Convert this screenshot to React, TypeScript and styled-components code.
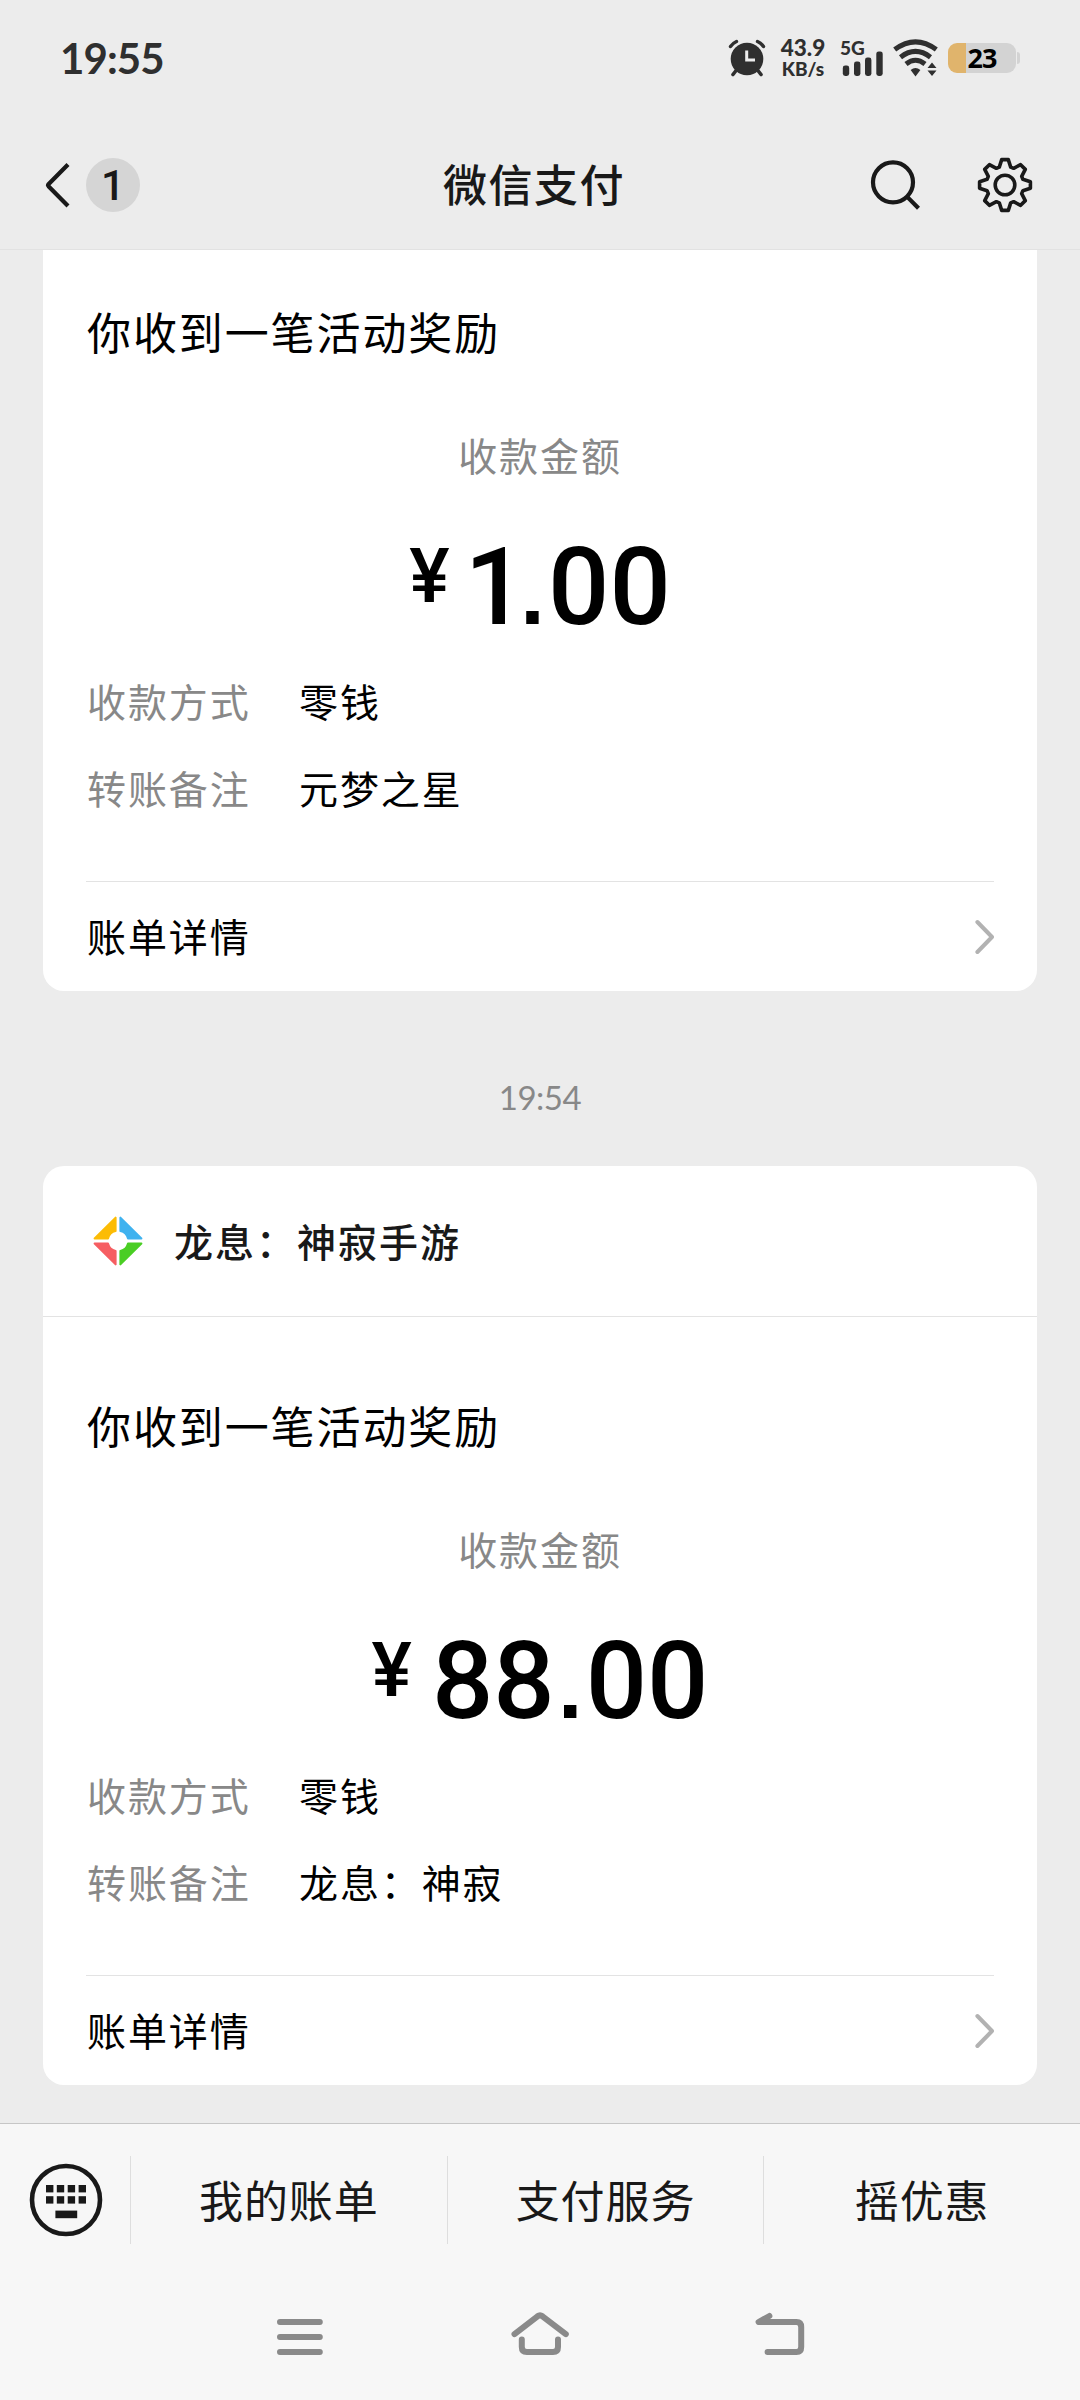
import React from "react";
import styled, { createGlobalStyle } from "styled-components";

const Global = createGlobalStyle`
  * { box-sizing: border-box; }
  body { margin: 0; background: #ececec; }
`;

const cjk = `"Noto Sans CJK SC", sans-serif`;

const Screen = styled.div`
  width: 1080px;
  height: 2400px;
  display: flex;
  flex-direction: column;
  overflow: hidden;
  background: #ececec;
  color: #000;
  font-family: ${cjk};
`;

const StatusBar = styled.div`
  flex: none;
  height: 120px;
  padding: 0 60px 4px 60px;
  display: flex;
  align-items: center;
  justify-content: space-between;
  color: #2f2f2f;
  font-family: Lato, sans-serif;
  font-weight: 700;
`;

const Clock = styled.div`
  font-size: 42px;
  letter-spacing: -0.9px;
`;

const StatusIcons = styled.div`
  display: flex;
  align-items: center;
`;

const Speed = styled.div`
  width: 46px;
  margin: 0 14px 0 14px;
  display: flex;
  flex-direction: column;
  align-items: center;
  font-size: 22.5px;
  font-weight: 900;
  line-height: 22px;
  white-space: nowrap;
`;

const SpeedUnit = styled.span`
  font-size: 19px;
  line-height: 20px;
`;

const Signal = styled.div`
  width: 44px;
  height: 38px;
  margin-right: 9px;
  position: relative;
`;

const Network = styled.span`
  position: absolute;
  left: 0;
  top: 0;
  font-size: 19px;
  font-weight: 900;
  line-height: 18px;
`;

const Battery = styled.div`
  width: 68px;
  height: 30px;
  margin-left: 9px;
  border-radius: 9px;
  display: flex;
  align-items: center;
  justify-content: center;
  background: linear-gradient(to right, #e0b46c 18px, #d3d3d3 18px);
  color: #000;
  font: 700 27px/30px "Noto Sans", sans-serif;
  letter-spacing: -1px;
`;

const BatteryTip = styled.div`
  width: 3px;
  height: 12px;
  margin: 0 0 0 1px;
  border-radius: 0 3px 3px 0;
  background: #d3d3d3;
`;

const TitleBar = styled.header`
  flex: none;
  height: 130px;
  padding: 0 44px 0 43px;
  display: grid;
  grid-template-columns: 1fr auto 1fr;
  align-items: center;
  border-bottom: 1px solid #e2e2e2;
`;

const BackGroup = styled.div`
  display: flex;
  align-items: center;
  gap: 15px;
`;

const Unread = styled.span`
  width: 54px;
  height: 54px;
  border-radius: 50%;
  background: #d5d5d5;
  color: #191919;
  text-align: center;
  font: 500 42px/56px Roboto, sans-serif;
`;

const Title = styled.h1`
  margin: 0;
  padding: 0 11px 4px 0;
  color: #191919;
  font-size: 44px;
  font-weight: 500;
  line-height: 60px;
  letter-spacing: 1.5px;
`;

const Actions = styled.div`
  display: flex;
  justify-content: flex-end;
  align-items: center;
  gap: 53px;
`;

const Feed = styled.main`
  flex: 1;
  padding: 0 43px 38px;
  display: flex;
  flex-direction: column;
`;

const Card = styled.article<{ $continued?: boolean }>`
  border-radius: ${(p) => (p.$continued ? "0 0 21px 21px" : "21px")};
  background: #fff;
`;

const Brand = styled.div`
  height: 151px;
  padding-left: 50px;
  display: flex;
  align-items: center;
  gap: 31px;
  border-bottom: 1px solid #e3e3e3;
  color: #191919;
  font-size: 39px;
  font-weight: 500;
  letter-spacing: 2px;
`;

const BrandName = styled.span`
  padding-bottom: 3px;
`;

const Body = styled.div<{ $top: number }>`
  padding: ${(p) => p.$top}px 43px 0;
`;

const Headline = styled.h2`
  margin: 0 0 0 1px;
  font-size: 44px;
  font-weight: 400;
  line-height: 60px;
  letter-spacing: 1.9px;
`;

const AmountLabel = styled.div`
  margin-top: 63px;
  text-align: center;
  color: #888;
  font-size: 39px;
  line-height: 60px;
  letter-spacing: 1.9px;
`;

const Amount = styled.div`
  height: 128px;
  margin-top: 39px;
  display: flex;
  justify-content: center;
  align-items: flex-start;
  font-family: Roboto, sans-serif;
  font-weight: 500;
`;

const Yen = styled.span<{ $narrow?: boolean }>`
  margin-right: ${(p) => (p.$narrow ? 15 : 20)}px;
  font-size: 76px;
  line-height: 106px;
`;

const Digits = styled.span<{ $narrow?: boolean }>`
  font-size: 108px;
  line-height: 128px;
  letter-spacing: ${(p) => (p.$narrow ? "-9px" : "0")};
`;

const Point = styled.span`
  width: 31px;
  text-align: center;
  font-family: "Liberation Sans", sans-serif;
  font-weight: 700;
  font-size: 88px;
  line-height: 141px;
`;

const Details = styled.dl`
  margin: 19px 0 0 1px;
  display: grid;
  grid-template-columns: 212px 1fr;
  row-gap: 27px;
  font-size: 39px;
  line-height: 60px;
  letter-spacing: 1.9px;
`;

const Term = styled.dt`
  color: #888;
`;

const Value = styled.dd`
  margin: 0;
`;

const BillLink = styled.a`
  height: 110px;
  margin-top: 64px;
  display: flex;
  align-items: center;
  justify-content: space-between;
  border-top: 1px solid #e3e3e3;
  font-size: 39px;
  letter-spacing: 1.9px;
`;

const BillLabel = styled.span`
  padding: 0 0 3px 1px;
`;

const Timestamp = styled.time`
  height: 175px;
  padding-top: 38px;
  display: block;
  text-align: center;
  color: #888;
  font: 400 33px/136px Lato, sans-serif;
  letter-spacing: -0.5px;
`;

const MenuBar = styled.nav`
  flex: none;
  height: 153px;
  display: grid;
  grid-template-columns: 130px repeat(3, 1fr);
  align-items: center;
  background: #f7f7f7;
  border-top: 1px solid #c6c6c6;
`;

const MenuItem = styled.div`
  height: 88px;
  padding-bottom: 2px;
  display: flex;
  align-items: center;
  justify-content: center;
  border-left: 1px solid #dedede;
  color: #191919;
  font-size: 44px;
  letter-spacing: 0.9px;
`;

const KeyboardCell = styled.div`
  padding-left: 1px;
  display: flex;
  justify-content: center;
`;

const SystemNav = styled.div`
  flex: none;
  height: 124px;
  padding: 0 270px 2px 270px;
  display: flex;
  align-items: center;
  justify-content: space-between;
  background: #f7f7f7;
`;

const AlarmIcon = () => (
  <svg width="38" height="38" viewBox="728 39 38 38" fill="none" stroke="#2f2f2f" strokeLinecap="round">
    <circle cx="747" cy="59" r="16.3" fill="#2f2f2f" stroke="none" />
    <path d="M730.5 46.5Q733 43 736.5 41.5M763.5 46.5Q761 43 757.5 41.5" strokeWidth="3.4" />
    <path d="M736.5 70L733 74.5M757.5 70L761 74.5" strokeWidth="3.6" />
    <path d="M746.7 50.5V60H755" stroke="#ececec" strokeWidth="3" strokeLinecap="butt" />
  </svg>
);

const SignalBars = () => (
  <svg width="44" height="38" viewBox="841 40 44 38" fill="#2f2f2f">
    <rect x="843.8" y="66.6" width="6.4" height="10.4" rx="2.4" />
    <rect x="855" y="62.6" width="6.4" height="14.4" rx="2.4" />
    <rect x="866" y="58.6" width="6.4" height="18.4" rx="2.4" />
    <rect x="877.3" y="52.4" width="6.4" height="24.6" rx="2.4" />
  </svg>
);

const WifiIcon = () => (
  <svg width="46" height="38" viewBox="894 40 46 38" fill="none" stroke="#2f2f2f" strokeWidth="5">
    <path d="M895.7 50.6Q916.5 35.2 937.3 50.6" />
    <path d="M901.5 58.2Q916.5 46.6 931.5 58.2" />
    <path d="M907 65Q916.5 57.6 926 65" />
    <path d="M911.6 71Q916.5 67 921.4 71L916.5 77.4Z" fill="#2f2f2f" stroke="none" />
    <path d="M928.5 69L933 63.5L937.5 69ZM928.5 71.5L933 77L937.5 71.5Z" fill="#2f2f2f" stroke="none" />
  </svg>
);

const BackIcon = () => (
  <svg width="28" height="48" viewBox="44 161 28 48" fill="none" stroke="#191919" strokeWidth="4.2">
    <path d="M69 164.5L49.5 184.2Q48.6 185.2 49.5 186.2L69 206" />
  </svg>
);

const SearchIcon = () => (
  <svg width="52" height="52" viewBox="869 159 52 52" fill="none" stroke="#191919" strokeWidth="4.2">
    <circle cx="893" cy="182.3" r="20" />
    <path d="M907 196.6L918.5 208.3" />
  </svg>
);

const TOOTH = [
  [-5.7, -17.9],
  [-3.3, -25.4],
  [3.3, -25.4],
  [5.7, -17.9],
];

const gearPoints = Array.from({ length: 8 }, (_, k) => {
  const a = (k * Math.PI) / 4;
  return TOOTH.map(([x, y]) =>
    [x * Math.cos(a) - y * Math.sin(a), x * Math.sin(a) + y * Math.cos(a)].map((n) => n.toFixed(2)).join(",")
  ).join(" ");
}).join(" ");

const GearIcon = () => (
  <svg width="62" height="62" viewBox="-31 -31 62 62" fill="none" stroke="#191919" strokeWidth="3.6" strokeLinejoin="round">
    <polygon points={gearPoints} />
    <circle r="9.8" />
  </svg>
);

const BrandIcon = () => (
  <svg width="50" height="50" viewBox="-25 -25 50 50" strokeLinejoin="round" strokeWidth="2">
    <path d="M-2.4 -23.4V-10A10 10 0 0 0 -10 -2.6H-23.4Z" fill="#fcbc05" stroke="#fcbc05" />
    <path d="M2.4 -23.4V-10A10 10 0 0 1 10 -2.6H23.4Z" fill="#3fb2ef" stroke="#3fb2ef" />
    <path d="M-2.4 23.4V10A10 10 0 0 1 -10 2.6H-23.4Z" fill="#f65e62" stroke="#f65e62" />
    <path d="M2.4 23.4V10A10 10 0 0 0 10 2.6H23.4Z" fill="#4ace24" stroke="#4ace24" />
  </svg>
);

const ChevronIcon = () => (
  <svg width="20" height="38" viewBox="0 0 20 38" fill="none" stroke="#b2b2b2" strokeWidth="4" strokeLinecap="round" strokeLinejoin="round">
    <path d="M3.4 4L18 19L3.4 34" />
  </svg>
);

const KeyboardIcon = () => (
  <svg width="74" height="74" viewBox="-37 -37 74 74" fill="#191919">
    <circle r="34" fill="none" stroke="#191919" strokeWidth="4.6" />
    {[-20, -9.2, 1.7, 12.6].map((x) => (
      <React.Fragment key={x}>
        <rect x={x} y="-15" width="7.4" height="7.4" />
        <rect x={x} y="-3.8" width="7.4" height="7.4" />
      </React.Fragment>
    ))}
    <rect x="-10.6" y="10.6" width="21.8" height="7.6" />
  </svg>
);

const navStroke = { fill: "none", stroke: "#8a8a8a", strokeWidth: 6, strokeLinecap: "round", strokeLinejoin: "round" } as const;

const RecentsIcon = () => (
  <svg width="60" height="50" viewBox="270 2312 60 50" {...navStroke}>
    <path d="M280 2322H319.8M280 2337H319.8M280 2352H319.8" />
  </svg>
);

const HomeIcon = () => (
  <svg width="60" height="50" viewBox="510 2312 60 50" {...navStroke}>
    <path d="M514.5 2334.2L537.5 2316.3Q540 2314.5 542.5 2316.3L565.8 2334.2" />
    <path d="M521.8 2339.5V2347Q521.8 2352 526.8 2352H553Q558 2352 558 2347V2339.5" />
  </svg>
);

const ReturnIcon = () => (
  <svg width="60" height="50" viewBox="750 2312 60 50" {...navStroke}>
    <path d="M769.4 2316L758.6 2322H796.5Q801.2 2322 801.2 2327V2347Q801.2 2352 796.5 2352H767.6" />
  </svg>
);

interface Payment {
  amount: string;
  note: string;
}

const PaymentBody = ({ amount, note, top }: Payment & { top: number }) => {
  const [whole, cents] = amount.split(".");
  const narrow = whole === "1";
  return (
    <Body $top={top}>
      <Headline>你收到一笔活动奖励</Headline>
      <AmountLabel>收款金额</AmountLabel>
      <Amount>
        <Yen $narrow={narrow}>¥</Yen>
        <Digits $narrow={narrow}>{whole}</Digits>
        <Point>.</Point>
        <Digits>{cents}</Digits>
      </Amount>
      <Details>
        <Term>收款方式</Term>
        <Value>零钱</Value>
        <Term>转账备注</Term>
        <Value>{note}</Value>
      </Details>
      <BillLink>
        <BillLabel>账单详情</BillLabel>
        <ChevronIcon />
      </BillLink>
    </Body>
  );
};

export default function App() {
  return (
    <Screen>
      <Global />
      <StatusBar>
        <Clock>19:55</Clock>
        <StatusIcons>
          <AlarmIcon />
          <Speed>
            43.9
            <SpeedUnit>KB/s</SpeedUnit>
          </Speed>
          <Signal>
            <Network>5G</Network>
            <SignalBars />
          </Signal>
          <WifiIcon />
          <Battery>23</Battery>
          <BatteryTip />
        </StatusIcons>
      </StatusBar>
      <TitleBar>
        <BackGroup>
          <BackIcon />
          <Unread>1</Unread>
        </BackGroup>
        <Title>微信支付</Title>
        <Actions>
          <SearchIcon />
          <GearIcon />
        </Actions>
      </TitleBar>
      <Feed>
        <Card $continued>
          <PaymentBody top={51} amount="1.00" note="元梦之星" />
        </Card>
        <Timestamp>19:54</Timestamp>
        <Card>
          <Brand>
            <BrandIcon />
            <BrandName>龙息：神寂手游</BrandName>
          </Brand>
          <PaymentBody top={78} amount="88.00" note="龙息：神寂" />
        </Card>
      </Feed>
      <MenuBar>
        <KeyboardCell>
          <KeyboardIcon />
        </KeyboardCell>
        <MenuItem>我的账单</MenuItem>
        <MenuItem>支付服务</MenuItem>
        <MenuItem>摇优惠</MenuItem>
      </MenuBar>
      <SystemNav>
        <RecentsIcon />
        <HomeIcon />
        <ReturnIcon />
      </SystemNav>
    </Screen>
  );
}
